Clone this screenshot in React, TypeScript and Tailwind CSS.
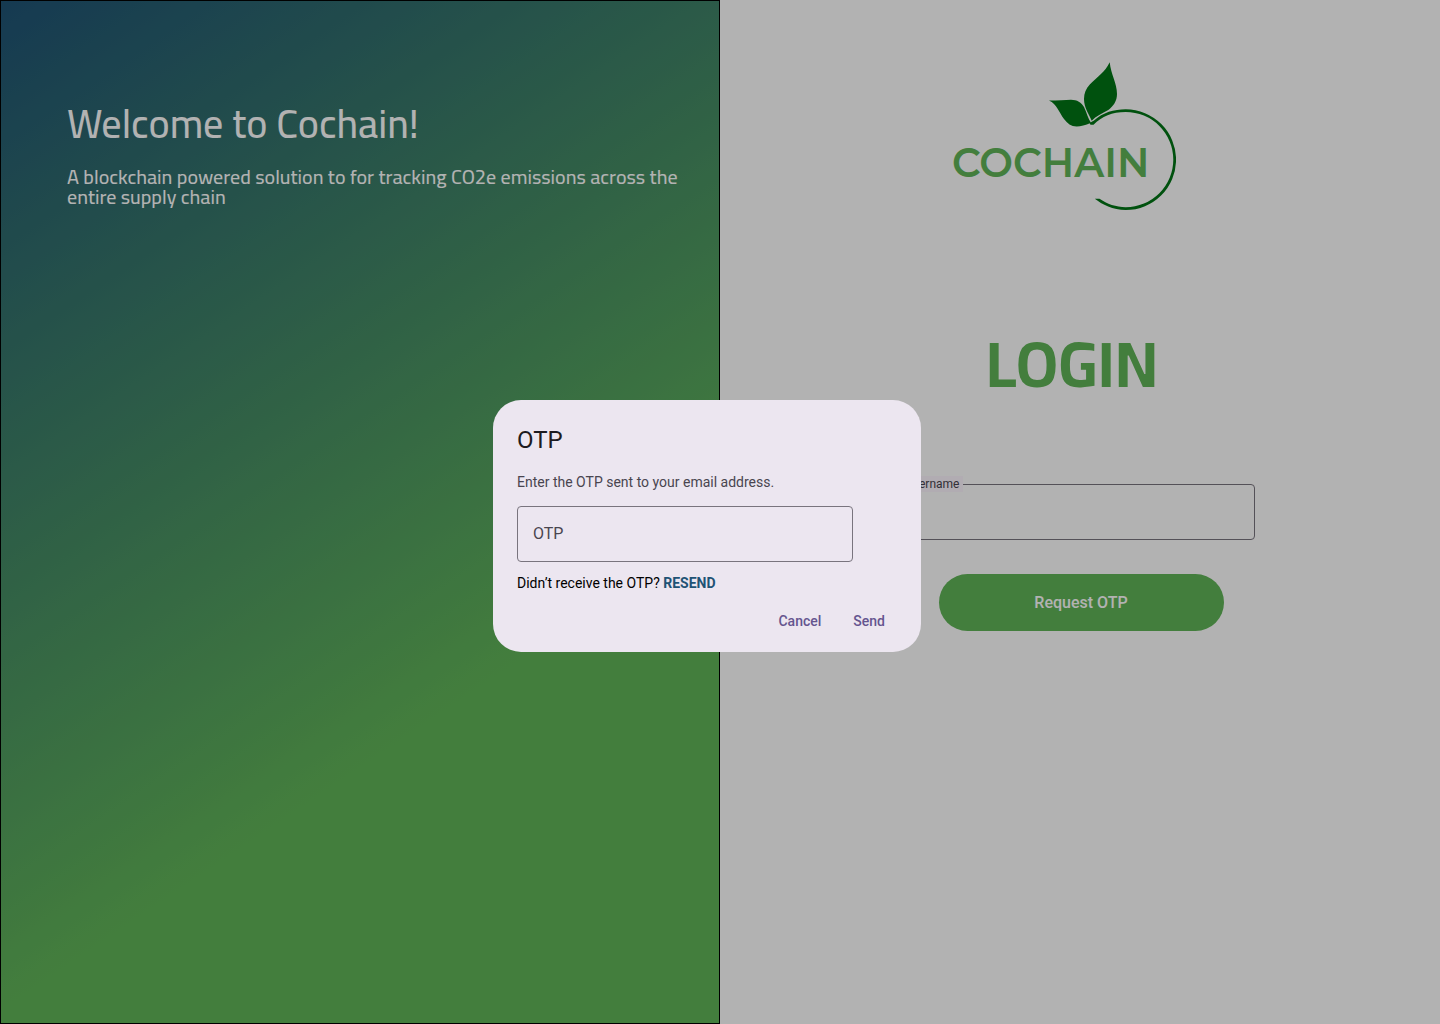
function CochainLogo() {
  return (
    <svg
      viewBox="0 0 224 148"
      className="mr-4 h-[148px] w-[224px]"
      role="img"
      aria-label="Cochain"
    >
      <g fill="#017515">
        <path d="M157.7 .3C159 13 165 21 165 32C165 39 161.500 44 156.300 48C150 51.500 144 54 139.700 58.700C137 52 132 46 132 37C132 31 134 26.500 138 22.300C145 15 153 10.500 157.700 .3Z" />
        <path d="M97 38.500C106 38.500 113 37.700 119 37.700C125 37.700 129.500 40.500 132 45C135 51 136 57 139 60.800C133 63.300 129 64.500 124.700 64.500C119 64.500 115.500 61.500 112 57C107 50.500 105 42 97 38.500Z" />
        <path d="M137.500 61L142 58.500C151 50.500 162 47.300 173.700 47.300A50.350 50.350 0 0 1 173.700 148C161 148 150 142.500 142.800 136.800L147.500 136.800C155 142 164 145.200 173.700 145.200A47.600 47.600 0 0 0 173.700 50C160 50 150 54.500 141.500 62.800L138.500 62.800Z" />
      </g>
      <text
        x="0"
        y="115"
        fill="#61b558"
        fontSize="40"
        className="font-['Montserrat','Lato',sans-serif] font-semibold"
      >
        COCHAIN
      </text>
    </svg>
  );
}

function WelcomePanel() {
  return (
    <section className="border border-black bg-[linear-gradient(146deg,#1f5375_0%,#61b558_67%)] px-4 pt-[99px] font-['Cairo','Titillium_Web','Roboto',sans-serif] font-medium text-white md:pr-6 md:pl-[66px]">
      <h1 className="text-[40px] leading-[48px]">Welcome to Cochain!</h1>
      <p className="mt-[19px] text-[20px] leading-5">
        A blockchain powered solution to for tracking CO2e emissions across the
        entire supply chain
      </p>
    </section>
  );
}

function LoginPanel() {
  return (
    <section className="flex flex-col items-center bg-white pt-[62px] pr-4 pl-[18px]">
      <div className="flex w-full flex-col items-center pr-[18px]">
        <CochainLogo />
        <h2 className="mt-[115px] font-['Cairo','Titillium_Web','Open_Sans',sans-serif] text-[64px] leading-[78px] font-bold text-[#61b558]">
          LOGIN
        </h2>
        <div className="relative mt-[81px] w-full max-w-[366px]">
          <label
            htmlFor="username"
            className="absolute -top-2 left-3 bg-[#fef7ff] px-1 text-xs leading-4 text-[#49454f]"
          >
            Username
          </label>
          <input
            id="username"
            type="text"
            className="block h-14 w-full rounded-sm border border-[#79747e] bg-transparent px-4 text-base"
          />
        </div>
      </div>
      <button
        type="button"
        className="mt-[34px] h-[57px] w-full max-w-[285px] rounded-full bg-[#61b558] text-base font-medium text-white"
      >
        Request OTP
      </button>
    </section>
  );
}

function OtpDialog() {
  return (
    <div className="fixed inset-0 flex items-center justify-center bg-black/30 pt-7 pr-[26px]">
      <form
        role="dialog"
        aria-modal="true"
        aria-labelledby="otp-title"
        className="w-full max-w-[428px] rounded-[28px] bg-[#ece6f0] px-6 pt-6 pb-[11px]"
      >
        <h2 id="otp-title" className="text-2xl leading-8 text-[#1d1b20]">
          OTP
        </h2>
        <p className="mt-4 text-sm leading-5 text-[#49454f]">
          Enter the OTP sent to your email address.
        </p>
        <input
          type="text"
          aria-label="OTP"
          placeholder="OTP"
          className="mt-[14px] block h-14 w-full max-w-[336px] rounded-sm border border-[#79747e] bg-transparent px-[15px] pb-[2px] text-base placeholder:text-[#49454f]"
        />
        <p className="mt-[11px] text-sm leading-5 text-black">
          Didn’t receive the OTP?{" "}
          <button type="button" className="font-bold text-[#1f5375]">
            RESEND
          </button>
        </p>
        <div className="mt-2 flex justify-end gap-2 text-sm leading-5 font-medium text-[#65558f]">
          <button type="button" className="rounded-full px-3 py-[10px]">
            Cancel
          </button>
          <button type="submit" className="rounded-full px-3 py-[10px]">
            Send
          </button>
        </div>
      </form>
    </div>
  );
}

export default function App() {
  return (
    <main className="grid min-h-screen grid-cols-2 font-['Roboto',sans-serif]">
      <WelcomePanel />
      <LoginPanel />
      <OtpDialog />
    </main>
  );
}
